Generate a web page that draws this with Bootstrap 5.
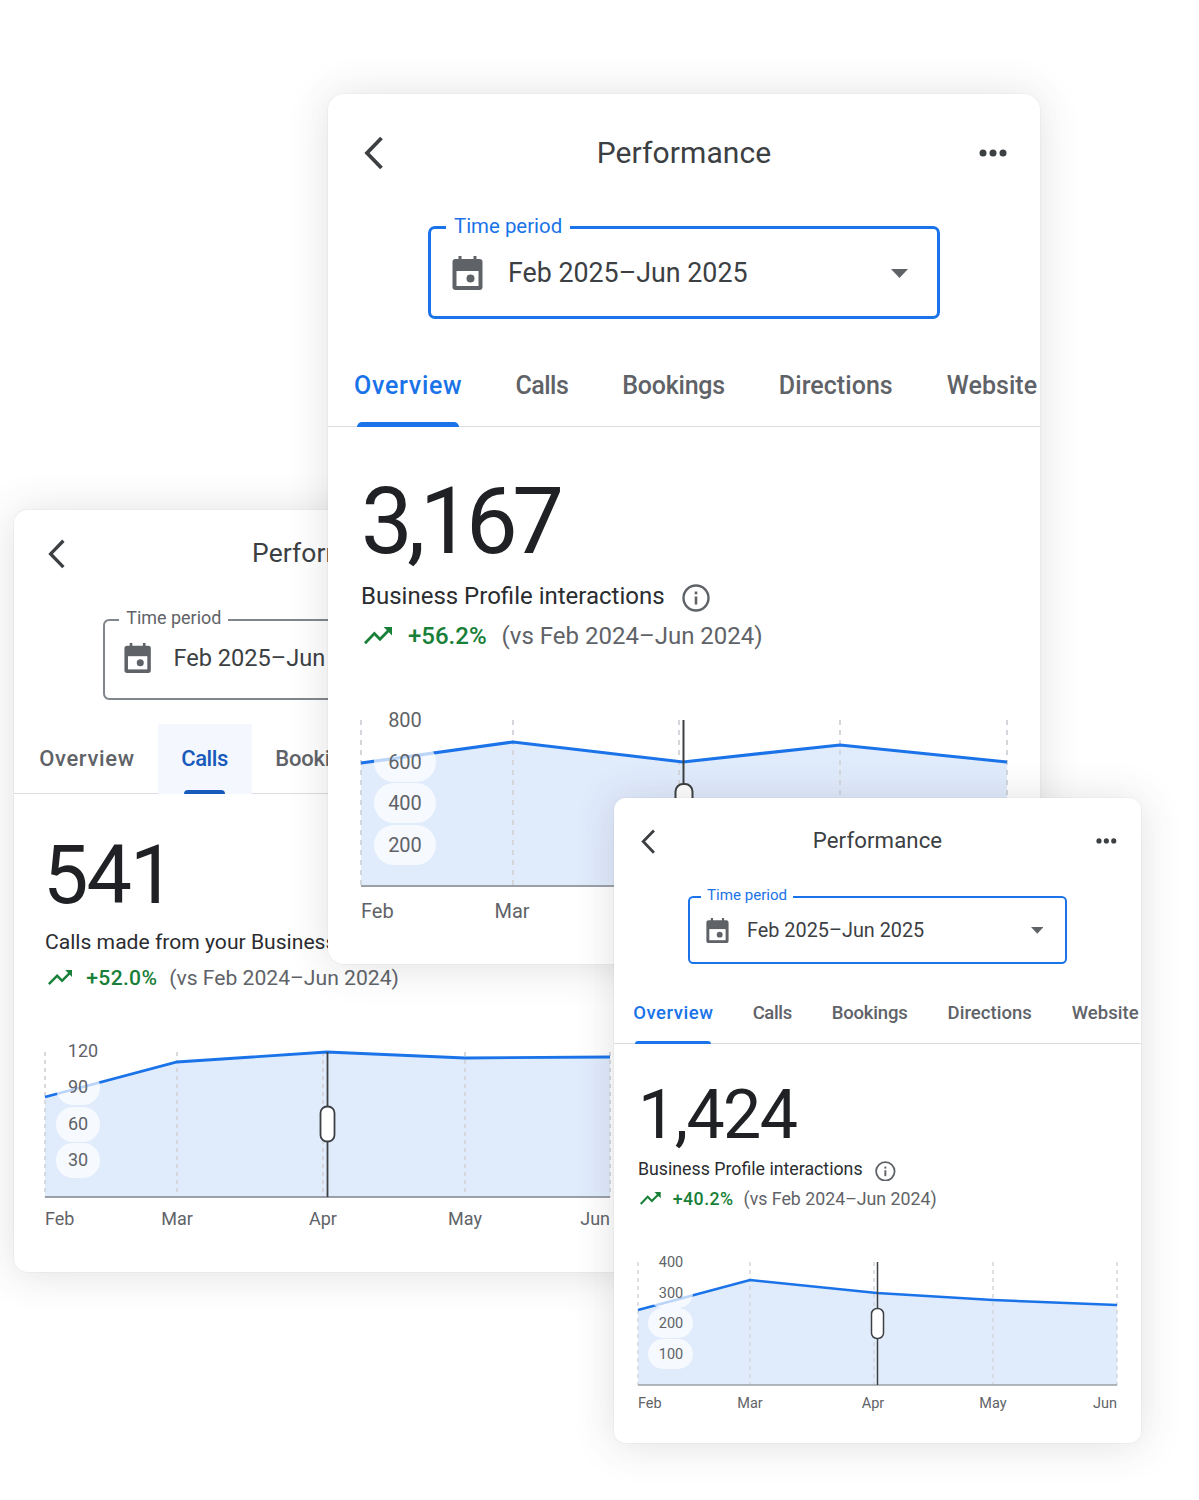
<!DOCTYPE html>
<html lang="en">
<head>
<meta charset="utf-8">
<title>Performance</title>
<link href="https://cdn.jsdelivr.net/npm/bootstrap@5.3.0/dist/css/bootstrap.min.css" rel="stylesheet">
<style>
body{margin:0;background:#fff;font-family:Roboto,"Liberation Sans",sans-serif;color:#202124}
.stage{position:relative;width:1199px;height:1500px;overflow:hidden}
.win{position:absolute;background:#fff;border-radius:calc(var(--u)*16);box-shadow:0 2px 42px rgba(60,64,67,.16),0 0 0 1px rgba(60,64,67,.03);overflow:hidden}
.win-a{--u:1px;--pad:33px;left:328px;top:94px;width:712px;height:870px;z-index:2}
.win-b{--u:.88px;--pad:31px;left:14px;top:510px;width:628px;height:762px;z-index:1}
.win-c{--u:.74px;--pad:24px;left:614px;top:798px;width:527px;height:645px;z-index:3}
.head{margin-top:calc(var(--u)*26);height:calc(var(--u)*64);padding:0 calc(var(--u)*33)}
.win-b .head{margin-top:15.4px;padding-left:31px}
.side{flex:1 1 0;display:flex;align-items:center}
.side-end{justify-content:flex-end}
.head-title{font-size:calc(var(--u)*30);color:#3c4043;letter-spacing:.1px;white-space:nowrap}
.chev{width:calc(var(--u)*20);height:calc(var(--u)*34);margin:calc(var(--u)*1) 0 0 calc(var(--u)*3)}
.dots{width:calc(var(--u)*28);height:calc(var(--u)*8);margin-top:calc(var(--u)*1)}
.field{position:relative;width:calc(var(--u)*512);height:calc(var(--u)*93);margin:calc(var(--u)*42) auto 0;border:calc(var(--u)*3) solid #1a73e8;border-radius:calc(var(--u)*7);padding:0 calc(var(--u)*29) 0 calc(var(--u)*21)}
.field-idle{border-color:#80868b;border-width:2px;padding-left:19.500px;padding-bottom:3px}
.field-label{position:absolute;left:calc(var(--u)*15);top:calc(var(--u)*-15);padding:0 calc(var(--u)*8);background:#fff;font-size:calc(var(--u)*20.4);line-height:calc(var(--u)*24);color:#1a73e8;white-space:nowrap}
.field-idle .field-label{color:#5f6368;left:14.500px}
.cal{width:calc(var(--u)*31);height:calc(var(--u)*34);flex:none}
.field-value{margin:calc(var(--u)*2) 0 0 calc(var(--u)*25);font-size:calc(var(--u)*26.8);color:#3c4043;white-space:nowrap}
.caret{width:calc(var(--u)*17);height:calc(var(--u)*9);flex:none;margin:calc(var(--u)*2) 0 0 auto}
.tabs{margin-top:calc(var(--u)*28);height:calc(var(--u)*80);border-bottom:1px solid #dadce0;flex-wrap:nowrap}
.win-b .tabs{margin-top:23.600px}
.tab{position:relative;display:flex;align-items:center;height:calc(var(--u)*80);padding:0 calc(var(--u)*27) calc(var(--u)*2);font-size:calc(var(--u)*25);font-weight:500;color:#5f6368;white-space:nowrap;text-decoration:none;letter-spacing:calc(var(--u)*.05)}
.tab-o{letter-spacing:calc(var(--u)*.72);margin-left:calc(var(--u)*-1)}
.win-b .tab-o{margin-left:1.500px}
.tab-k{letter-spacing:calc(var(--u)*-.5);margin-left:calc(var(--u)*-1)}
.tab-m{letter-spacing:calc(var(--u)*-.25)}
.tab-on{color:#1a73e8}
.tab-on::after{content:"";position:absolute;left:calc(var(--u)*30);right:calc(var(--u)*30);bottom:0;height:calc(var(--u)*5);background:#1a73e8;border-radius:calc(var(--u)*5) calc(var(--u)*5) 0 0}
.tab-hover{background:#f4f8fe;color:#185abc}
.tab-hover::after{background:#185abc}
.body{padding-left:var(--pad)}
.big{margin-top:calc(var(--u)*45);font-size:calc(var(--u)*92);line-height:calc(var(--u)*100);color:#202124;white-space:nowrap}
.big-a{letter-spacing:-5.500px}
.big-b{letter-spacing:-2px;margin-top:37.600px;margin-left:-2px}
.big-c{letter-spacing:-1.600px}
.metric{margin-top:calc(var(--u)*6);font-size:calc(var(--u)*24);line-height:calc(var(--u)*36);white-space:nowrap;color:#2a2c30}
.win-b .metric{margin-top:6.160px}
.info{width:calc(var(--u)*28);height:calc(var(--u)*28);margin:calc(var(--u)*4) 0 0 calc(var(--u)*17);flex:none}
.delta{margin-top:calc(var(--u)*4);font-size:calc(var(--u)*24);line-height:calc(var(--u)*36);white-space:nowrap;color:#5f6368}
.win-b .delta{margin-top:4.500px}
.trend{width:calc(var(--u)*28);height:calc(var(--u)*18);margin-left:calc(var(--u)*3);flex:none}
.pct{margin-left:calc(var(--u)*16);margin-right:calc(var(--u)*15);color:#188038;font-weight:500}
.win-b .pct{letter-spacing:.3px;margin-right:12px}
.win-c .pct{letter-spacing:.45px;margin-right:10px}
.plot{display:block;overflow:visible;margin-top:calc(var(--u)*46)}
.win-b .plot{margin-top:45.700px}
.win-c .plot{margin-top:32.700px}
.plot text{font-family:Roboto,"Liberation Sans",sans-serif;fill:#5f6368}
</style>
</head>
<body>
<div class="stage">

<!-- left window -->
<section class="win win-b">
  <div class="head d-flex align-items-center">
    <div class="side"><svg class="chev" viewBox="0 0 20 34"><path d="M17.500 2 3 17l14.500 15" fill="none" stroke="#3c4043" stroke-width="3.800"/></svg></div>
    <div class="head-title">Performance</div>
    <div class="side side-end"><svg class="dots" viewBox="0 0 28 8"><circle cx="4" cy="4" r="3.500" fill="#3c4043"/><circle cx="14" cy="4" r="3.500" fill="#3c4043"/><circle cx="24" cy="4" r="3.500" fill="#3c4043"/></svg></div>
  </div>
  <div class="field field-idle d-flex align-items-center">
    <span class="field-label">Time period</span>
    <svg class="cal" viewBox="0 0 30 34"><rect x="6" width="3" height="6" fill="#5f6368"/><rect x="21" width="3" height="6" fill="#5f6368"/><rect y="3" width="30" height="31" rx="3" fill="#5f6368"/><rect x="4" y="15" width="22" height="15" fill="#fff"/><circle cx="18" cy="22.500" r="4" fill="#5f6368"/></svg>
    <span class="field-value">Feb 2025–Jun 2025</span>
    <svg class="caret" viewBox="0 0 17 9"><path d="M0 0h17L8.500 9z" fill="#5f6368"/></svg>
  </div>
  <nav class="nav tabs">
    <a class="tab tab-o" href="#">Overview</a>
    <a class="tab tab-k tab-on tab-hover" href="#">Calls</a>
    <a class="tab tab-m" href="#">Bookings</a>
  </nav>
  <div class="body">
    <div class="big big-b">541</div>
    <div class="metric d-flex align-items-center">Calls made from your Business Profile</div>
    <div class="delta d-flex align-items-center">
      <svg class="trend" viewBox="2 6 20 12.600" preserveAspectRatio="none"><path d="M16 6l2.290 2.290-4.880 4.880-4-4L2 16.590 3.410 18l6-6 4 4 6.300-6.290L22 12V6z" fill="#188038"/></svg>
      <span class="pct">+52.0%</span><span>(vs Feb 2024–Jun 2024)</span>
    </div>
    <svg class="plot" width="565" height="200" viewBox="45 1040 565 200">
      <path d="M45 1097 177 1062 327 1052 465 1058 610 1057V1197H45z" fill="#e0ebfc"/>
      <g stroke="#d3d6db" stroke-width="1.800" stroke-dasharray="4 4"><path d="M45 1052V1197M177 1052V1197M323 1052V1197M465 1052V1197M610 1052V1197"/></g>
      <path d="M45 1097 177 1062 327 1052 465 1058 610 1057" fill="none" stroke="#1a73e8" stroke-width="2.800"/>
      <path d="M45 1197H610" stroke="#9aa0a6" stroke-width="1.800"/>
      <g fill="#fff" fill-opacity=".7"><rect x="56" y="1070" width="44" height="35" rx="17"/><rect x="56" y="1107" width="44" height="35" rx="17"/><rect x="56" y="1143" width="44" height="35" rx="17"/></g>
      <g font-size="18" text-anchor="middle"><text x="83" y="1057">120</text><text x="78" y="1093">90</text><text x="78" y="1130">60</text><text x="78" y="1166">30</text></g>
      <path d="M327.500 1052V1197" stroke="#3c4043" stroke-width="1.800"/>
      <rect x="320.500" y="1106.500" width="14" height="35" rx="6.500" fill="#fff" stroke="#3c4043" stroke-width="1.800"/>
      <g font-size="18" text-anchor="middle"><text x="45" y="1225" text-anchor="start">Feb</text><text x="177" y="1225">Mar</text><text x="323" y="1225">Apr</text><text x="465" y="1225">May</text><text x="610" y="1225" text-anchor="end">Jun</text></g>
    </svg>
  </div>
</section>

<!-- centre window -->
<section class="win win-a">
  <div class="head d-flex align-items-center">
    <div class="side"><svg class="chev" viewBox="0 0 20 34"><path d="M17.500 2 3 17l14.500 15" fill="none" stroke="#3c4043" stroke-width="3.800"/></svg></div>
    <div class="head-title">Performance</div>
    <div class="side side-end"><svg class="dots" viewBox="0 0 28 8"><circle cx="4" cy="4" r="3.500" fill="#3c4043"/><circle cx="14" cy="4" r="3.500" fill="#3c4043"/><circle cx="24" cy="4" r="3.500" fill="#3c4043"/></svg></div>
  </div>
  <div class="field d-flex align-items-center">
    <span class="field-label">Time period</span>
    <svg class="cal" viewBox="0 0 30 34"><rect x="6" width="3" height="6" fill="#5f6368"/><rect x="21" width="3" height="6" fill="#5f6368"/><rect y="3" width="30" height="31" rx="3" fill="#5f6368"/><rect x="4" y="15" width="22" height="15" fill="#fff"/><circle cx="18" cy="22.500" r="4" fill="#5f6368"/></svg>
    <span class="field-value">Feb 2025–Jun 2025</span>
    <svg class="caret" viewBox="0 0 17 9"><path d="M0 0h17L8.500 9z" fill="#5f6368"/></svg>
  </div>
  <nav class="nav tabs">
    <a class="tab tab-o tab-on" href="#">Overview</a>
    <a class="tab tab-k" href="#">Calls</a>
    <a class="tab tab-m" href="#">Bookings</a>
    <a class="tab" href="#">Directions</a>
    <a class="tab" href="#">Website</a>
  </nav>
  <div class="body">
    <div class="big big-a">3,167</div>
    <div class="metric d-flex align-items-center">Business Profile interactions
      <svg class="info" viewBox="0 0 28 28"><circle cx="14" cy="14" r="12.500" fill="none" stroke="#5f6368" stroke-width="2.400"/><rect x="12.700" y="12.500" width="2.600" height="8" fill="#5f6368"/><rect x="12.700" y="7.500" width="2.600" height="2.800" fill="#5f6368"/></svg>
    </div>
    <div class="delta d-flex align-items-center">
      <svg class="trend" viewBox="2 6 20 12.600" preserveAspectRatio="none"><path d="M16 6l2.290 2.290-4.880 4.880-4-4L2 16.590 3.410 18l6-6 4 4 6.300-6.290L22 12V6z" fill="#188038"/></svg>
      <span class="pct">+56.2%</span><span>(vs Feb 2024–Jun 2024)</span>
    </div>
    <svg class="plot" width="646" height="230" viewBox="361 700 646 230">
      <path d="M361 763 513 742 683 762 840 745 1007 762V886H361z" fill="#e0ebfc"/>
      <g stroke="#d3d6db" stroke-width="2" stroke-dasharray="5 5"><path d="M361 720V886M513 720V886M679 720V886M840 720V886M1007 720V886"/></g>
      <path d="M361 763 513 742 683 762 840 745 1007 762" fill="none" stroke="#1a73e8" stroke-width="3.200"/>
      <path d="M361 886H1007" stroke="#9aa0a6" stroke-width="2"/>
      <g fill="#fff" fill-opacity=".7"><rect x="374" y="742" width="62" height="40" rx="20"/><rect x="374" y="783" width="62" height="40" rx="20"/><rect x="374" y="825" width="62" height="40" rx="20"/></g>
      <g font-size="20" text-anchor="middle"><text x="405" y="727">800</text><text x="405" y="769">600</text><text x="405" y="810">400</text><text x="405" y="852">200</text></g>
      <path d="M683.500 720V886" stroke="#3c4043" stroke-width="2"/>
      <rect x="675.500" y="784" width="17" height="40" rx="7.500" fill="#fff" stroke="#3c4043" stroke-width="2"/>
      <g font-size="20" text-anchor="middle"><text x="361" y="918" text-anchor="start">Feb</text><text x="512" y="918">Mar</text></g>
    </svg>
  </div>
</section>

<!-- right window -->
<section class="win win-c">
  <div class="head d-flex align-items-center">
    <div class="side"><svg class="chev" viewBox="0 0 20 34"><path d="M17.500 2 3 17l14.500 15" fill="none" stroke="#3c4043" stroke-width="3.800"/></svg></div>
    <div class="head-title">Performance</div>
    <div class="side side-end"><svg class="dots" viewBox="0 0 28 8"><circle cx="4" cy="4" r="3.500" fill="#3c4043"/><circle cx="14" cy="4" r="3.500" fill="#3c4043"/><circle cx="24" cy="4" r="3.500" fill="#3c4043"/></svg></div>
  </div>
  <div class="field d-flex align-items-center">
    <span class="field-label">Time period</span>
    <svg class="cal" viewBox="0 0 30 34"><rect x="6" width="3" height="6" fill="#5f6368"/><rect x="21" width="3" height="6" fill="#5f6368"/><rect y="3" width="30" height="31" rx="3" fill="#5f6368"/><rect x="4" y="15" width="22" height="15" fill="#fff"/><circle cx="18" cy="22.500" r="4" fill="#5f6368"/></svg>
    <span class="field-value">Feb 2025–Jun 2025</span>
    <svg class="caret" viewBox="0 0 17 9"><path d="M0 0h17L8.500 9z" fill="#5f6368"/></svg>
  </div>
  <nav class="nav tabs">
    <a class="tab tab-o tab-on" href="#">Overview</a>
    <a class="tab tab-k" href="#">Calls</a>
    <a class="tab tab-m" href="#">Bookings</a>
    <a class="tab" href="#">Directions</a>
    <a class="tab" href="#">Website</a>
  </nav>
  <div class="body">
    <div class="big big-c">1,424</div>
    <div class="metric d-flex align-items-center">Business Profile interactions
      <svg class="info" viewBox="0 0 28 28"><circle cx="14" cy="14" r="12.500" fill="none" stroke="#5f6368" stroke-width="2.400"/><rect x="12.700" y="12.500" width="2.600" height="8" fill="#5f6368"/><rect x="12.700" y="7.500" width="2.600" height="2.800" fill="#5f6368"/></svg>
    </div>
    <div class="delta d-flex align-items-center">
      <svg class="trend" viewBox="2 6 20 12.600" preserveAspectRatio="none"><path d="M16 6l2.290 2.290-4.880 4.880-4-4L2 16.590 3.410 18l6-6 4 4 6.300-6.290L22 12V6z" fill="#188038"/></svg>
      <span class="pct">+40.2%</span><span>(vs Feb 2024–Jun 2024)</span>
    </div>
    <svg class="plot" width="479" height="170" viewBox="638 1245 479 170">
      <path d="M638 1310 750 1280 877 1293 993 1300 1117 1305V1385H638z" fill="#e0ebfc"/>
      <g stroke="#d3d6db" stroke-width="1.500" stroke-dasharray="4 4"><path d="M638 1262V1385M750 1262V1385M874 1262V1385M993 1262V1385M1117 1262V1385"/></g>
      <path d="M638 1310 750 1280 877 1293 993 1300 1117 1305" fill="none" stroke="#1a73e8" stroke-width="2.400"/>
      <path d="M638 1385H1117" stroke="#9aa0a6" stroke-width="1.500"/>
      <g fill="#fff" fill-opacity=".7"><rect x="648" y="1278" width="45" height="30" rx="15"/><rect x="648" y="1308" width="45" height="30" rx="15"/><rect x="648" y="1339" width="45" height="30" rx="15"/></g>
      <g font-size="14.500" text-anchor="middle"><text x="671" y="1267">400</text><text x="671" y="1298">300</text><text x="671" y="1328">200</text><text x="671" y="1359">100</text></g>
      <path d="M877.500 1262V1385" stroke="#3c4043" stroke-width="1.500"/>
      <rect x="871.500" y="1308.500" width="12" height="30" rx="5.500" fill="#fff" stroke="#3c4043" stroke-width="1.500"/>
      <g font-size="14.500" text-anchor="middle"><text x="638" y="1408" text-anchor="start">Feb</text><text x="750" y="1408">Mar</text><text x="873" y="1408">Apr</text><text x="993" y="1408">May</text><text x="1117" y="1408" text-anchor="end">Jun</text></g>
    </svg>
  </div>
</section>

</div>
<script src="https://cdn.jsdelivr.net/npm/bootstrap@5.3.0/dist/js/bootstrap.bundle.min.js"></script>
</body>
</html>
